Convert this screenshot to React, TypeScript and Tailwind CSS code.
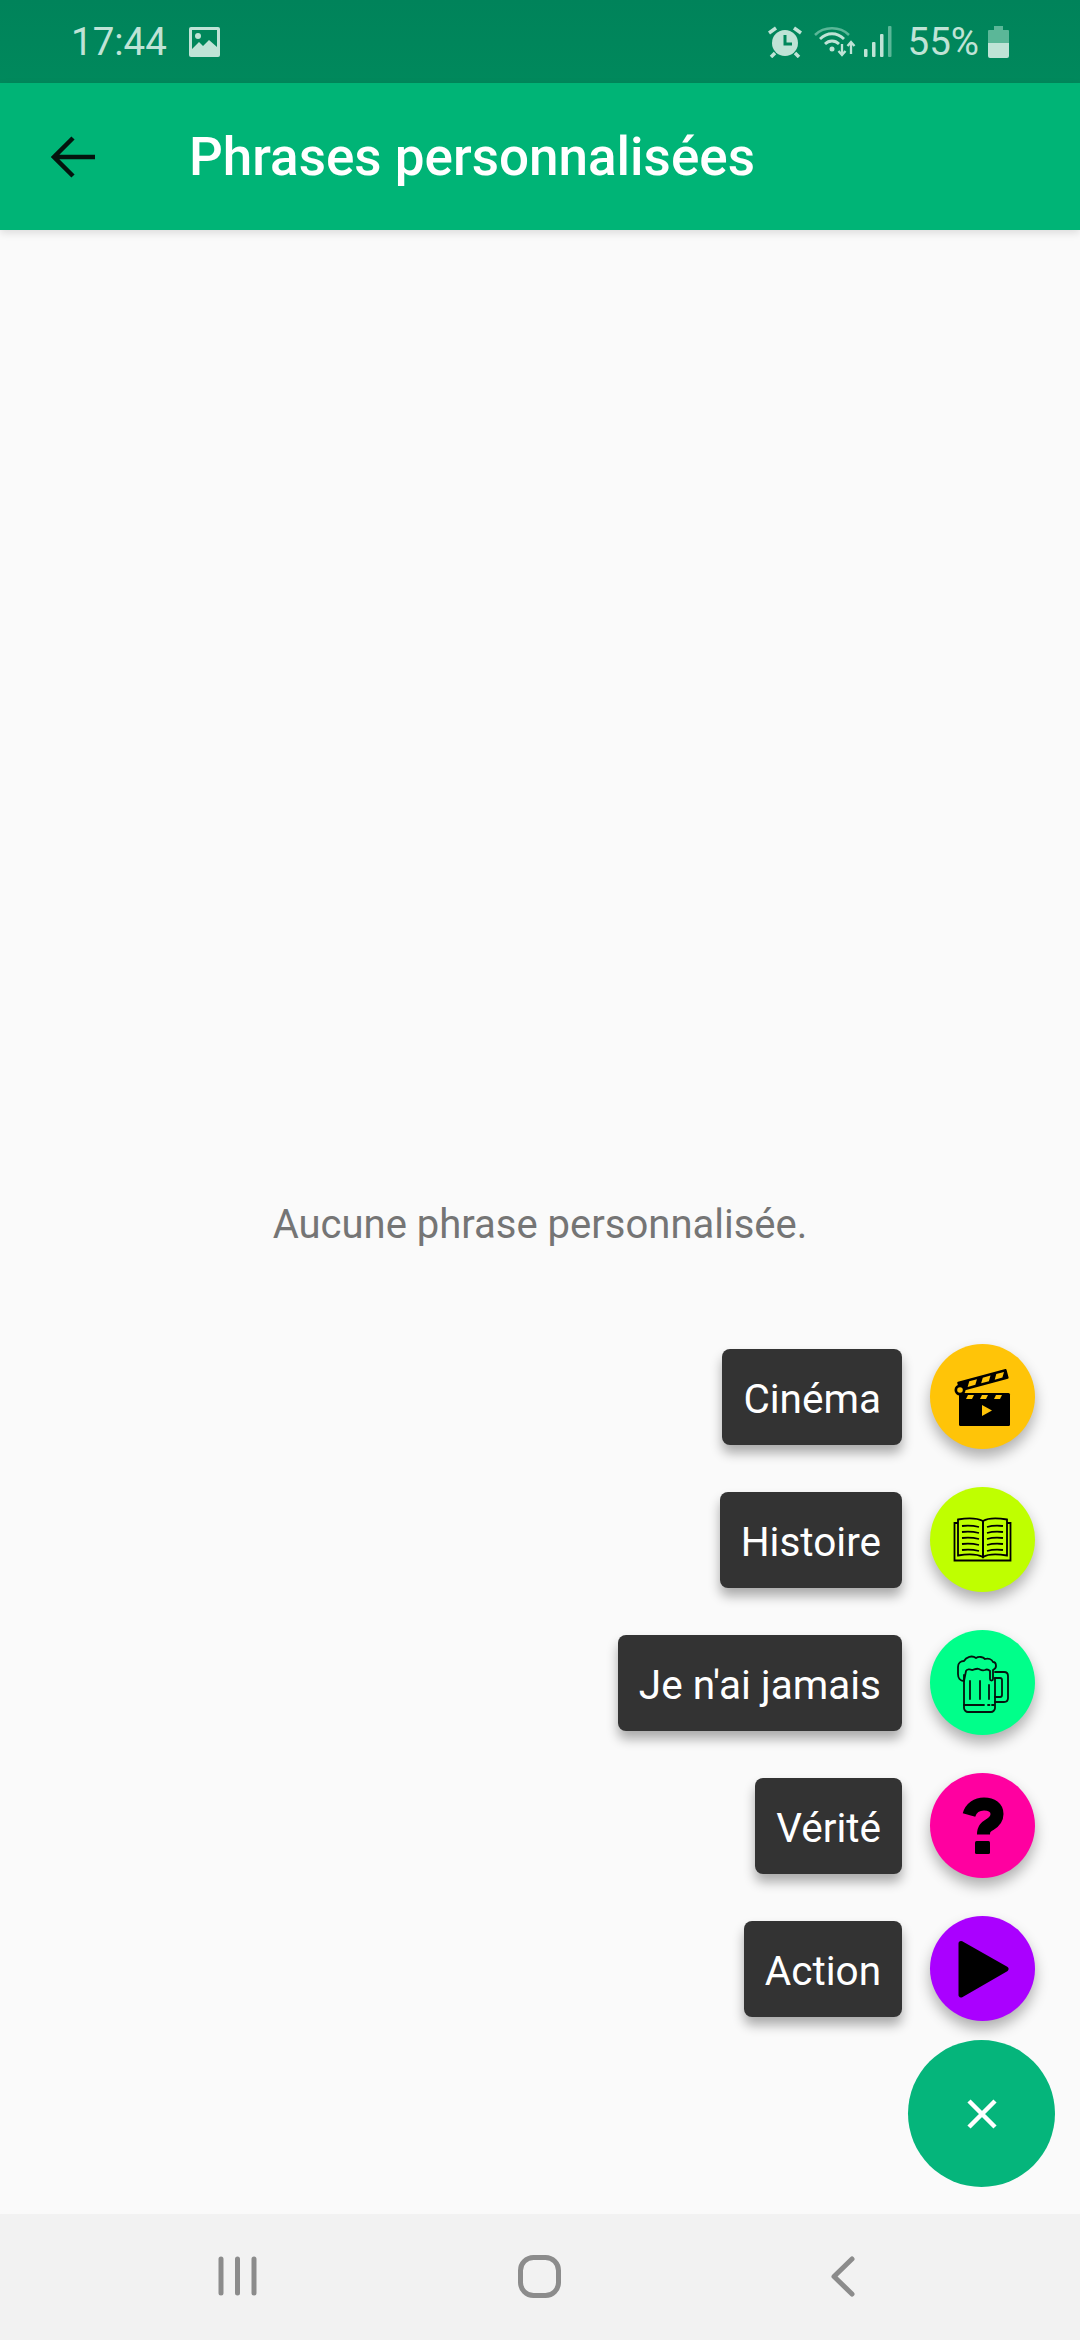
import React from 'react';

function ClapperIcon() {
  return (
    <svg width="63" height="63" viewBox="0 0 63 63">
      <rect x="8" y="28" width="51" height="33" rx="1.500" fill="#000" />
      <path d="M17 30h6l-2 4h-6zM31 30h6l-2 4h-6zM45 30h6l-2 4h-6z" fill="#ffc408" />
      <path d="M31 40l10 5.500-10 5.500z" fill="#ffc408" />
      <g transform="translate(6 17) rotate(-15)">
        <rect x="0" y="0" width="51" height="10" rx="1" fill="#000" />
        <path d="M12 2.500h8l-3 5h-8zM26 2.500h8l-3 5h-8zM40 2.500h8l-3 5h-8z" fill="#ffc408" />
      </g>
      <circle cx="9" cy="25" r="5.500" fill="#000" />
      <circle cx="9" cy="25" r="2.800" fill="#ffc408" />
    </svg>
  );
}

function BookIcon() {
  return (
    <svg width="63" height="63" viewBox="0 0 63 63" fill="none" stroke="#000" strokeWidth="1.800">
      <path d="M7 15H3.500v37.500h56V15H56" />
      <path d="M7 11.500c9-1.500 19-1.500 25 1.500v36c-6-3-16-3-25-1.500z" />
      <path d="M56 11.500c-9-1.500-19-1.500-24 1.500v36c5-3 15-3 24-1.500z" />
      <path d="M11 18c6-.800 11-.500 17 1M11 24c6-.800 11-.500 17 1M11 30c6-.800 11-.500 17 1M11 36c6-.800 11-.500 17 1M11 42c6-.800 11-.500 17 1" />
      <path d="M52 18c-6-.800-11-.500-16 1M52 24c-6-.800-11-.500-16 1M52 30c-6-.800-11-.500-16 1M52 36c-6-.800-11-.500-16 1M52 42c-6-.800-11-.500-16 1" />
    </svg>
  );
}

function BeerIcon() {
  return (
    <svg width="63" height="63" viewBox="0 0 63 63" fill="none" stroke="#04140e" strokeWidth="1.800" strokeLinecap="round" strokeLinejoin="round">
      <path d="M13 30c-4 0-6-3-6-7v-7c0-4 3-6 6-6 2-4 8-6 12-3 3-2 7-1 9 1 3-1 7 0 8 3 2 0 3 2 3 4 0 2-1 3-3 4v9c0 2-3 2-3 0v-8c-2-2-3-2-5-1-3 1-4 0-6-1-3-1-5 1-7 1-2-1-5-1-6 1z" />
      <path d="M13 24v33c0 2 2 4 4 4h23c2 0 4-2 4-4V27" />
      <path d="M19 30v18M29 30v18M38 34v14" />
      <path d="M13 54h20M37 54h1.500M41 54h2" />
      <path d="M44 21h9c2.500 0 4 1.500 4 4v22c0 2.500-1.500 4-4 4h-9" />
      <path d="M44 27h5c1.500 0 2 .500 2 2v15c0 1.500-.500 2-2 2h-5" />
    </svg>
  );
}

function QuestionIcon() {
  return (
    <svg width="63" height="63" viewBox="0 0 63 63">
      <path d="M18 21c2-7 8-11 15-11 8 0 13 4 13 10 0 5-3 8-7 10.500-4 2.500-6.500 4-6.500 10" fill="none" stroke="#000" strokeWidth="13" />
      <rect x="24" y="47" width="15" height="13" rx="1.500" fill="#000" />
    </svg>
  );
}

function PlayIcon() {
  return (
    <svg width="63" height="63" viewBox="0 0 63 63">
      <path d="M10 6.500L55 32 10 58z" fill="#000" stroke="#000" strokeWidth="5" strokeLinejoin="round" />
    </svg>
  );
}

const actions = [
  { label: 'Cinéma', color: 'bg-[#ffc408]', icon: <ClapperIcon /> },
  { label: 'Histoire', color: 'bg-[#bfff00]', icon: <BookIcon /> },
  { label: "Je n'ai jamais", color: 'bg-[#00ff8a]', icon: <BeerIcon /> },
  { label: 'Vérité', color: 'bg-[#ff00a0]', icon: <QuestionIcon /> },
  { label: 'Action', color: 'bg-[#aa00ff]', icon: <PlayIcon /> },
];

function StatusBar() {
  return (
    <div className="h-[83px] shrink-0 flex items-center bg-gradient-to-b from-[#00835a] to-[#00895c] pl-[71px] pr-[71px] text-[#bfe3d6] text-[38.500px] leading-none">
      <span className="mt-[1px]">17:44</span>
      {/* gallery notification */}
      <svg className="ml-[22px]" width="31" height="30" viewBox="0 0 31 30">
        <rect width="31" height="30" rx="2" fill="#bfe3d6" />
        <rect x="3" y="3" width="25" height="20" fill="#00875b" />
        <circle cx="9" cy="9" r="3" fill="#bfe3d6" />
        <path d="M3 22l7-7 4 4 6-6 8 7v5H3z" fill="#bfe3d6" />
      </svg>
      <div className="flex-1" />
      {/* alarm */}
      <svg width="34" height="32" viewBox="0 0 34 32">
        <circle cx="17" cy="17" r="13" fill="#bfe3d6" />
        <path d="M17 9v9h7" fill="none" stroke="#00875b" strokeWidth="3" />
        <path d="M1 7l7-5M33 7l-7-5M3 31l4-4M31 31l-4-4" stroke="#bfe3d6" strokeWidth="3.500" />
      </svg>
      {/* wifi with activity arrows */}
      <svg className="ml-[12px]" width="42" height="32" viewBox="0 0 42 32" fill="none">
        <path d="M1 9C10 0 26 0 35 9" stroke="#5bb798" strokeWidth="2.500" />
        <path d="M6 13c7-7 17-7 24 0M11 18c4-4 10-4 14 0" stroke="#bfe3d6" strokeWidth="2.800" />
        <circle cx="18" cy="23" r="2.500" fill="#bfe3d6" />
        <path d="M28 18v10M24.500 25l3.500 4 3.500-4" stroke="#bfe3d6" strokeWidth="2.300" />
        <path d="M37 28V17M33.500 20l3.500-4 3.500 4" stroke="#bfe3d6" strokeWidth="2.300" />
      </svg>
      {/* signal bars */}
      <svg className="ml-[8px]" width="28" height="31" viewBox="0 0 28 31">
        <rect x="0" y="23" width="3.500" height="8" rx="1" fill="#bfe3d6" />
        <rect x="8" y="16" width="3.500" height="15" rx="1" fill="#bfe3d6" />
        <rect x="16" y="8" width="3.500" height="23" rx="1" fill="#bfe3d6" />
        <rect x="24" y="0" width="3.500" height="31" rx="1" fill="#5bb798" />
      </svg>
      <span className="ml-[16px] mt-[1px]">55%</span>
      {/* battery */}
      <svg className="ml-[9px]" width="21" height="32" viewBox="0 0 21 32">
        <path d="M6 0h9v4h5a1 1 0 0 1 1 1v12H0V5a1 1 0 0 1 1-1h5z" fill="#5bb798" />
        <path d="M0 17h21v13a2 2 0 0 1-2 2H2a2 2 0 0 1-2-2z" fill="#bfe3d6" />
      </svg>
    </div>
  );
}

function NavBar() {
  return (
    <div className="h-[126px] shrink-0 grid grid-cols-3 items-center justify-items-center px-[86px] pb-[2px] bg-[#f2f2f2]">
      <svg width="39" height="40" viewBox="0 0 39 40" stroke="#8c8c8c" strokeWidth="5" strokeLinecap="round">
        <path d="M3 3v34M19.500 3v34M36 3v34" />
      </svg>
      <svg width="43" height="43" viewBox="0 0 43 43">
        <rect x="2.500" y="2.500" width="38" height="38" rx="13" fill="none" stroke="#8c8c8c" strokeWidth="5" />
      </svg>
      <svg width="25" height="41" viewBox="0 0 25 41" fill="none" stroke="#8c8c8c" strokeWidth="5" strokeLinecap="round" strokeLinejoin="round">
        <path d="M22 3L4 20.500 22 38" />
      </svg>
    </div>
  );
}

export default function App() {
  return (
    <div className="w-[1080px] h-[2340px] flex flex-col overflow-hidden bg-[#fafafa] font-['Roboto',sans-serif]">
      <StatusBar />
      <header className="relative z-10 h-[147px] shrink-0 flex items-center bg-[#00b476] shadow-[0_3px_8px_rgba(0,0,0,0.12)]">
        <svg className="ml-[51px]" width="44" height="42" viewBox="0 0 44 42" fill="none" stroke="#04140e" strokeWidth="4.500">
          <path d="M44 21H4M22 2L3 21l19 19" />
        </svg>
        <h1 className="ml-[94px] mt-[2px] text-[53px] leading-none font-medium text-white">Phrases personnalisées</h1>
      </header>
      <main className="relative flex-1 flex items-center justify-center">
        <p className="text-[#757575] text-[40px] leading-none mt-[6px]">Aucune phrase personnalisée.</p>
        <div className="absolute right-[25px] bottom-[27px] flex flex-col items-end">
          <div className="flex flex-col items-end gap-[38px] pr-[20px]">
            {actions.map((a) => (
              <div key={a.label} className="flex items-center gap-[28px]">
                <span className="h-[96px] flex items-center px-[21px] pt-[5px] rounded-[8px] bg-[#333333] text-white text-[40.500px] leading-none shadow-[0_8px_12px_rgba(0,0,0,0.32)]">
                  {a.label}
                </span>
                <button className={`w-[105px] h-[105px] rounded-full flex items-center justify-center shadow-[0_8px_14px_rgba(0,0,0,0.3)] ${a.color}`}>
                  {a.icon}
                </button>
              </div>
            ))}
          </div>
          <button className="mt-[19px] w-[147px] h-[147px] rounded-full flex items-center justify-center bg-[#05b57b]">
            <svg width="32" height="32" viewBox="0 0 32 32" stroke="#fff" strokeWidth="4.500">
              <path d="M3 3l26 26M29 3L3 29" />
            </svg>
          </button>
        </div>
      </main>
      <NavBar />
    </div>
  );
}
